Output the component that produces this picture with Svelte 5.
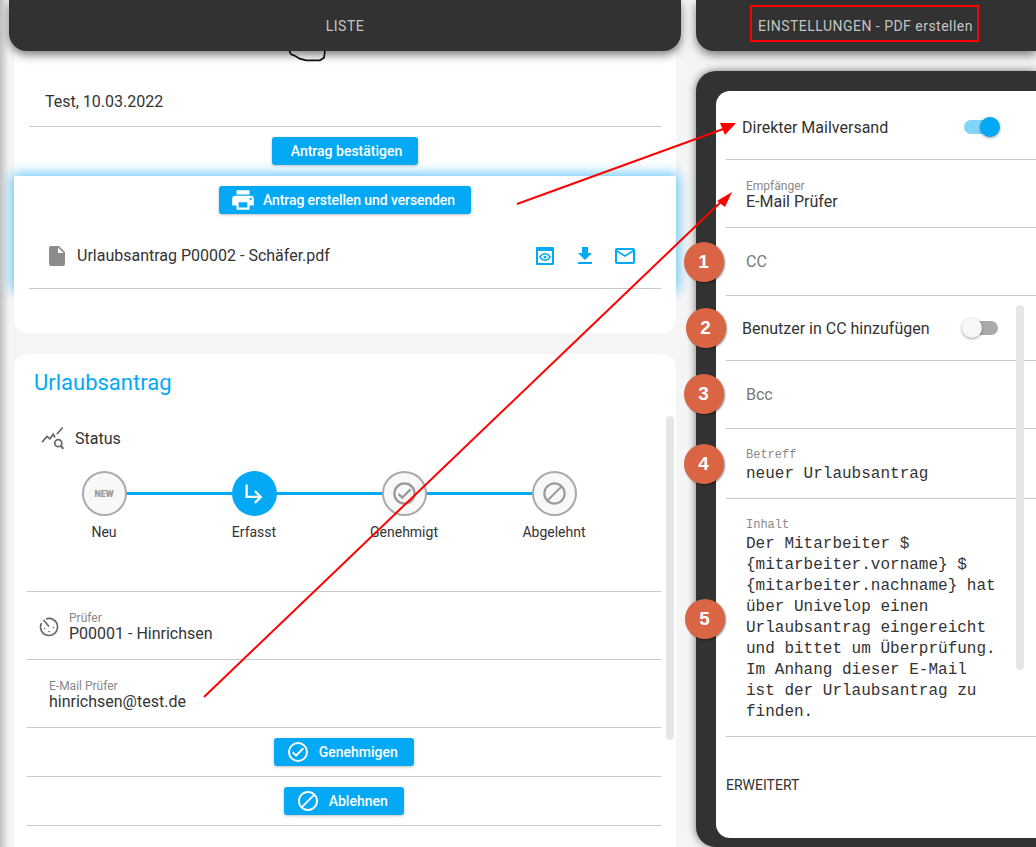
<script>
  const steps = [
    { label: "Neu", kind: "new" },
    { label: "Erfasst", kind: "active", path: "M19,15L13,21L11.58,19.58L15.17,16H4V4H6V14H15.17L11.58,10.42L13,9L19,15Z" },
    { label: "Genehmigt", kind: "icon", path: "M12,2A10,10 0 0,0 2,12A10,10 0 0,0 12,22A10,10 0 0,0 22,12A10,10 0 0,0 12,2M12,20A8,8 0 0,1 4,12A8,8 0 0,1 12,4A8,8 0 0,1 20,12A8,8 0 0,1 12,20M16.59,7.58L10,14.17L7.41,11.59L6,13L10,17L18,9L16.59,7.58Z" },
    { label: "Abgelehnt", kind: "icon", path: "M12 2C6.5 2 2 6.5 2 12S6.5 22 12 22 22 17.5 22 12 17.5 2 12 2M12 4C13.9 4 15.6 4.7 17 5.7L5.7 17C4.7 15.6 4 13.9 4 12C4 7.6 7.6 4 12 4M12 20C10.1 20 8.4 19.3 7 18.3L18.3 7C19.3 8.4 20 10.1 20 12C20 16.4 16.4 20 12 20Z" }
  ];

  const checkIcon = steps[2].path;
  const cancelIcon = steps[3].path;

  const bodyLines = [
    "Der Mitarbeiter $",
    "{mitarbeiter.vorname} $",
    "{mitarbeiter.nachname} hat",
    "über Univelop einen",
    "Urlaubsantrag eingereicht",
    "und bittet um Überprüfung.",
    "Im Anhang dieser E-Mail",
    "ist der Urlaubsantrag zu",
    "finden."
  ];

  const markers = [
    { n: 1, x: 703.5, y: 262 },
    { n: 2, x: 705.5, y: 328 },
    { n: 3, x: 703.5, y: 394 },
    { n: 4, x: 703.5, y: 464 },
    { n: 5, x: 704.5, y: 619 }
  ];
</script>

<div class="page">
  <section class="left">
    <header class="bar left-bar">LISTE</header>

    <div class="card first">
      <svg class="scribble" width="46" height="13" viewBox="0 0 46 13">
        <path d="M1 0L3 4L8 6L13 9L21 11L37 11L42 8L43 0" fill="none" stroke="#111" stroke-width="2" />
      </svg>
      <div class="row sign">Test, 10.03.2022</div>
      <div class="btn-row confirm">
        <button class="btn">Antrag bestätigen</button>
      </div>

      <div class="glow">
        <div class="btn-row create">
          <button class="btn">
            <svg width="26" height="26" viewBox="0 0 24 24"><path fill="#fff" d="M18,3H6V7H18M19,12A1,1 0 0,1 18,11A1,1 0 0,1 19,10A1,1 0 0,1 20,11A1,1 0 0,1 19,12M16,19H8V14H16M19,8H5A3,3 0 0,0 2,11V17H6V21H18V17H22V11A3,3 0 0,0 19,8Z" /></svg>
            Antrag erstellen und versenden
          </button>
        </div>
        <div class="file">
          <svg width="24" height="24" viewBox="0 0 24 24"><path fill="#8c8c8c" d="M13,9V3.5L18.5,9M6,2C4.89,2 4,2.89 4,4V20A2,2 0 0,0 6,22H18A2,2 0 0,0 20,20V8L14,2H6Z" /></svg>
          <span class="file-name">Urlaubsantrag P00002 - Schäfer.pdf</span>
          <div class="file-actions">
            <svg width="24" height="24" viewBox="-2 -2 24 24"><path fill="#03a9f4" fill-rule="evenodd" d="M2 1H18A1 1 0 0 1 19 2V18A1 1 0 0 1 18 19H2A1 1 0 0 1 1 18V2A1 1 0 0 1 2 1ZM3 5V17H17V5Z" /><path fill="#03a9f4" fill-rule="evenodd" d="M10 7C13 7 15 9.300 16 11C15 12.700 13 15 10 15C7 15 5 12.700 4 11C5 9.300 7 7 10 7ZM10 8.500C8.100 8.500 6.700 9.700 5.900 11C6.700 12.300 8.100 13.500 10 13.500C11.900 13.500 13.300 12.300 14.100 11C13.300 9.700 11.900 8.500 10 8.500ZM10 9.500A1.500 1.500 0 1 1 10 12.500A1.500 1.500 0 1 1 10 9.500Z" /></svg>
            <svg width="24" height="24" viewBox="0 0 24 24"><path fill="#03a9f4" d="M5,20H19V18H5M19,9H15V3H9V9H5L12,16L19,9Z" /></svg>
            <svg width="24" height="24" viewBox="0 0 24 24"><path fill="#03a9f4" d="M22,6C22,4.9 21.1,4 20,4H4C2.9,4 2,4.9 2,6V18C2,19.1 2.9,20 4,20H20C21.1,20 22,19.1 22,18V6M20,6L12,11L4,6H20M20,18H4V8L12,13L20,8V18Z" /></svg>
          </div>
        </div>
      </div>
      <div class="card-end"></div>
    </div>

    <div class="card second">
      <h2>Urlaubsantrag</h2>
      <div class="scroll-track"></div>
      <div class="status">
        <svg width="24" height="24" viewBox="0 0 24 24" fill="none" stroke="#666" stroke-width="1.700">
          <path d="M1 16.200L6 10.500L9 12.800L12.300 8.200L14 11.500" />
          <path d="M15.700 8.200L21.700 1.500" />
          <circle cx="17.300" cy="17.200" r="3.500" />
          <path d="M20 19.800L22.300 22.800" stroke-width="2" />
        </svg>
        <span>Status</span>
      </div>
      <div class="stepper">
        {#each steps as step}
          <div class="step">
            <div class="circle {step.kind}">
              {#if step.kind === "new"}
                <span class="new-text">NEW</span>
              {:else}
                <svg width="27" height="27" viewBox="0 0 24 24"><path fill={step.kind === "active" ? "#fff" : "#999"} d={step.path} /></svg>
              {/if}
            </div>
            <span class="step-label">{step.label}</span>
          </div>
        {/each}
      </div>
      <div class="field pruefer">
        <svg width="24" height="24" viewBox="0 0 24 24" fill="none" stroke="#666" stroke-width="1.600">
          <path d="M9 5A8.500 8.500 0 1 1 4.500 9" />
          <path d="M6.500 6L12 12.500" />
          <circle cx="7.500" cy="14.500" r="0.800" fill="#666" stroke="none" />
          <circle cx="12" cy="17.500" r="0.800" fill="#666" stroke="none" />
          <circle cx="16.500" cy="13.500" r="0.800" fill="#666" stroke="none" />
        </svg>
        <div class="stack">
          <small>Prüfer</small>
          <span>P00001 - Hinrichsen</span>
        </div>
      </div>
      <div class="field mail">
        <div class="stack">
          <small>E-Mail Prüfer</small>
          <span>hinrichsen@test.de</span>
        </div>
      </div>
      <div class="btn-row decide">
        <button class="btn">
          <svg width="24" height="24" viewBox="0 0 24 24"><path fill="#fff" d={checkIcon} /></svg>
          Genehmigen
        </button>
      </div>
      <div class="btn-row decide">
        <button class="btn">
          <svg width="24" height="24" viewBox="0 0 24 24"><path fill="#fff" d={cancelIcon} /></svg>
          Ablehnen
        </button>
      </div>
    </div>
  </section>

  <section class="right">
    <header class="bar right-bar"><span>EINSTELLUNGEN - PDF erstellen</span></header>
    <div class="panel">
      <div class="sheet">
        <div class="scroll-track"></div>
        <div class="line toggle-line first-line">
          <span>Direkter Mailversand</span>
          <div class="switch on"><i></i></div>
        </div>
        <div class="line input recipient">
          <small>Empfänger</small>
          <span>E-Mail Prüfer</span>
        </div>
        <div class="line input empty"><span>CC</span></div>
        <div class="line toggle-line second-line">
          <span>Benutzer in CC hinzufügen</span>
          <div class="switch"><i></i></div>
        </div>
        <div class="line input empty"><span>Bcc</span></div>
        <div class="line input mono subject">
          <small>Betreff</small>
          <span>neuer Urlaubsantrag</span>
        </div>
        <div class="line input mono content">
          <small>Inhalt</small>
          {#each bodyLines as text}
            <span>{text}</span>
          {/each}
        </div>
        <div class="more">ERWEITERT</div>
      </div>
    </div>
  </section>

  <!-- annotations drawn on top of the screenshot -->
  <svg class="arrows" width="1036" height="847" viewBox="0 0 1036 847">
    <line x1="517" y1="204" x2="726" y2="128" stroke="#f00" stroke-width="2" />
    <polygon points="736,123 720,123 725,135" fill="#f00" />
    <line x1="204" y1="697" x2="724" y2="199" stroke="#f00" stroke-width="2" />
    <polygon points="732,192 717,201 725,207" fill="#f00" />
    <rect x="751" y="6" width="227" height="35" fill="none" stroke="#f00" stroke-width="2" />
  </svg>

  {#each markers as m}
    <div class="marker" style="left: {m.x - 20}px; top: {m.y - 20}px">{m.n}</div>
  {/each}
</div>

<style>
  :global(body) {
    background: #f5f5f5;
    color: #333;
    font-family: Roboto, "Liberation Sans", sans-serif;
  }

  .page {
    position: relative;
    display: flex;
    width: 1036px;
    height: 847px;
    overflow: hidden;
    background: linear-gradient(90deg, #c2c2c2, #f5f5f5 9px) no-repeat 0 0 / 10px 100%;
  }

  .left {
    width: 696px;
    flex: none;
    display: flex;
    flex-direction: column;
  }

  .right {
    flex: 1;
    min-width: 0;
  }

  .bar {
    position: relative;
    z-index: 2;
    height: 51px;
    flex: none;
    background: #323232;
    color: #c4c4c4;
    font-size: 14px;
    letter-spacing: 0.48px;
    display: flex;
    align-items: center;
    justify-content: center;
    box-shadow: 0 4px 10px rgba(0, 0, 0, 0.5);
  }

  .left-bar {
    margin-left: 9px;
    width: 672px;
    border-radius: 0 0 18px 18px;
  }

  .right-bar {
    border-radius: 0 0 0 18px;
    justify-content: flex-start;
    padding-left: 62px;
  }

  .card {
    width: 662px;
    margin-left: 14px;
    background: #fff;
  }

  .first {
    height: 282px;
    flex: none;
    border-radius: 0 0 14px 14px;
    display: flex;
    flex-direction: column;
  }

  .scribble {
    display: block;
    margin-left: 271px;
    height: 11px;
    flex: none;
    overflow: visible;
  }

  .row {
    margin: 0 15px;
    border-bottom: 1.500px solid #c8c8c8;
  }

  .sign {
    height: 63.500px;
    line-height: 79px;
    padding-left: 16px;
    font-size: 16px;
    color: #333;
  }

  .btn-row {
    display: flex;
    justify-content: center;
    align-items: center;
  }

  .confirm {
    height: 49px;
    align-items: flex-start;
    padding-top: 10px;
    box-sizing: border-box;
  }

  .btn {
    display: inline-flex;
    align-items: center;
    justify-content: center;
    gap: 8px;
    height: 28px;
    padding: 0 16px 0 19px;
    border: 0;
    border-radius: 3px;
    background: #03a9f4;
    color: #fff;
    font: 500 14px Roboto, sans-serif;
    box-shadow: 0 1px 3px rgba(0, 0, 0, 0.25);
  }

  .glow {
    position: relative;
    height: 113.500px;
    background: #fff;
    box-shadow: 0 0 12px 2px #5cc4f5;
    flex: none;
  }

  .create {
    padding-top: 10px;
  }

  .create .btn {
    gap: 7px;
    padding: 0 16px 0 11px;
    letter-spacing: -0.1px;
  }

  .file {
    display: flex;
    align-items: center;
    height: 67.500px;
    margin: 8px 15px 0;
    padding: 2px 0 0 16px;
    box-sizing: border-box;
    border-bottom: 1.500px solid #c8c8c8;
    gap: 8px;
  }

  .file-name {
    font-size: 16px;
    color: #333;
  }

  .file-actions {
    margin-left: auto;
    margin-right: 24px;
    display: flex;
    align-items: center;
    gap: 16px;
  }

  .card-end {
    position: relative;
    flex: 1;
    background: #fff;
    border-radius: 0 0 14px 14px;
  }

  .second {
    position: relative;
    margin-top: 21px;
    border-radius: 14px 14px 0 0;
    flex: 1;
  }

  h2 {
    margin: 0;
    padding: 16px 0 0 20px;
    height: 46px;
    font-size: 22px;
    font-weight: 400;
    color: #03a9f4;
  }

  .scroll-track {
    position: absolute;
    width: 8px;
    background: #e6e6e6;
    border-radius: 4px;
  }

  .second .scroll-track {
    right: 2px;
    top: 62px;
    height: 324px;
  }

  .status {
    display: flex;
    align-items: center;
    gap: 10px;
    margin-top: 6px;
    padding-left: 27px;
    height: 32px;
    font-size: 16px;
    color: #333;
  }

  .stepper {
    display: flex;
    margin: 17px 0 0 15px;
    width: 600px;
    height: 120px;
  }

  .step {
    position: relative;
    width: 150px;
    display: flex;
    flex-direction: column;
    align-items: center;
    font-size: 14px;
    color: #333;
  }

  .step:not(:last-child)::after {
    content: "";
    position: absolute;
    top: 21px;
    left: 75px;
    width: 150px;
    height: 3px;
    background: #03a9f4;
  }

  .circle {
    position: relative;
    z-index: 1;
    box-sizing: border-box;
    width: 45px;
    height: 45px;
    border-radius: 50%;
    display: flex;
    align-items: center;
    justify-content: center;
    background: #f8f8f8;
    border: 2px solid #aaa;
  }

  .circle.active {
    background: #03a9f4;
    border: 0;
  }

  .new-text {
    font-size: 9px;
    font-weight: 900;
    color: #9a9a9a;
  }

  .step-label {
    margin-top: 8px;
    line-height: 16px;
  }

  .field {
    display: flex;
    align-items: center;
    margin: 0 15px 0 13px;
    height: 68px;
    border-top: 1.500px solid #c8c8c8;
    box-sizing: border-box;
  }

  .pruefer {
    gap: 8px;
    padding-left: 10px;
  }

  .mail {
    padding-left: 22px;
    height: 69px;
    border-bottom: 1.500px solid #c8c8c8;
  }

  .stack {
    display: flex;
    flex-direction: column;
    padding-top: 4px;
  }

  .stack small {
    font-size: 12px;
    line-height: 13px;
    color: #888;
  }

  .stack span {
    font-size: 16px;
    line-height: 18px;
    color: #333;
  }

  .decide {
    margin: 0 15px 0 13px;
    height: 49px;
    border-bottom: 1.500px solid #c8c8c8;
    box-sizing: border-box;
  }

  .decide .btn {
    gap: 9px;
    padding: 0 16px 0 11.500px;
  }

  .panel {
    position: relative;
    margin-top: 20px;
    height: 776px;
    box-sizing: border-box;
    padding: 20px 0 0 20px;
    background: #323232;
    border-radius: 20px 0 0 20px;
    box-shadow: 0 0 8px rgba(0, 0, 0, 0.55);
  }

  .sheet {
    position: relative;
    height: 747px;
    background: #fff;
    border-radius: 14px 0 0 14px;
  }

  .sheet .scroll-track {
    left: 300px;
    top: 214px;
    height: 365px;
  }

  .line {
    margin-left: 10px;
    border-bottom: 1.500px solid #c8c8c8;
    box-sizing: border-box;
    font-size: 16px;
    color: #333;
  }

  .toggle-line {
    display: flex;
    align-items: center;
    padding-left: 16px;
  }

  .first-line {
    height: 69px;
    padding-top: 4px;
  }

  .second-line {
    height: 65px;
  }

  .switch {
    position: relative;
    width: 28px;
    height: 14px;
    margin-left: 40px;
    border-radius: 7px;
    background: #aaa;
  }

  .switch i {
    position: absolute;
    top: -3px;
    left: -8px;
    width: 20px;
    height: 20px;
    border-radius: 50%;
    background: #f8f8f8;
    box-shadow: 0 1px 3px rgba(0, 0, 0, 0.4);
  }

  .switch.on {
    background: #81d4fa;
    margin-left: 76px;
  }

  .switch.on i {
    left: 16px;
    background: #03a9f4;
  }

  .input {
    display: flex;
    flex-direction: column;
    justify-content: center;
    padding-left: 20px;
    height: 68px;
  }

  .recipient {
    padding-top: 2px;
  }

  .input small {
    font-size: 12px;
    font-weight: 400;
    line-height: 13px;
    color: #888;
  }

  .input span {
    line-height: 17px;
  }

  .empty {
    color: #777;
    font-weight: 400;
  }

  .mono {
    font-family: "Liberation Mono", monospace;
  }

  .subject {
    height: 70px;
    justify-content: flex-start;
    padding-top: 20px;
  }

  .subject span {
    margin-top: 4px;
  }

  .content {
    height: 238px;
    justify-content: flex-start;
    padding-top: 20px;
  }

  .content small {
    margin-bottom: 1.500px;
  }

  .content span {
    line-height: 21px;
    white-space: pre;
  }

  .more {
    margin: 40px 0 0 10px;
    font-size: 14px;
    line-height: 16px;
    color: #333;
  }

  .arrows {
    position: absolute;
    left: 0;
    top: 0;
    z-index: 5;
  }

  .marker {
    position: absolute;
    z-index: 6;
    width: 40px;
    height: 40px;
    border-radius: 50%;
    background: #d96545;
    color: #fff;
    font: 700 19px "Liberation Sans", sans-serif;
    display: flex;
    align-items: center;
    justify-content: center;
    box-shadow: 1px 1px 2px rgba(0, 0, 0, 0.45);
  }
</style>
